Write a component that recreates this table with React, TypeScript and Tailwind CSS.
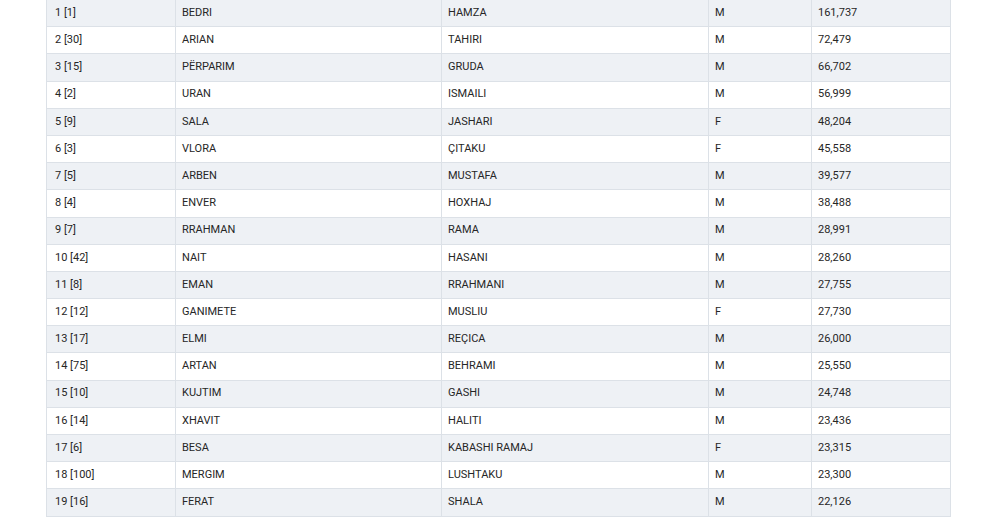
import React from "react";

const rows: [string, string, string, string, string][] = [
  ["1 [1]", "BEDRI", "HAMZA", "M", "161,737"],
  ["2 [30]", "ARIAN", "TAHIRI", "M", "72,479"],
  ["3 [15]", "PËRPARIM", "GRUDA", "M", "66,702"],
  ["4 [2]", "URAN", "ISMAILI", "M", "56,999"],
  ["5 [9]", "SALA", "JASHARI", "F", "48,204"],
  ["6 [3]", "VLORA", "ÇITAKU", "F", "45,558"],
  ["7 [5]", "ARBEN", "MUSTAFA", "M", "39,577"],
  ["8 [4]", "ENVER", "HOXHAJ", "M", "38,488"],
  ["9 [7]", "RRAHMAN", "RAMA", "M", "28,991"],
  ["10 [42]", "NAIT", "HASANI", "M", "28,260"],
  ["11 [8]", "EMAN", "RRAHMANI", "M", "27,755"],
  ["12 [12]", "GANIMETE", "MUSLIU", "F", "27,730"],
  ["13 [17]", "ELMI", "REÇICA", "M", "26,000"],
  ["14 [75]", "ARTAN", "BEHRAMI", "M", "25,550"],
  ["15 [10]", "KUJTIM", "GASHI", "M", "24,748"],
  ["16 [14]", "XHAVIT", "HALITI", "M", "23,436"],
  ["17 [6]", "BESA", "KABASHI RAMAJ", "F", "23,315"],
  ["18 [100]", "MERGIM", "LUSHTAKU", "M", "23,300"],
  ["19 [16]", "FERAT", "SHALA", "M", "22,126"],
];

export default function App() {
  return (
    <div className="w-[1000px] h-[517px] overflow-hidden bg-white" style={{ fontFamily: "Roboto, 'Liberation Sans', sans-serif" }}>
      <div className="ml-[46px] w-[905px] border-l border-r border-[#dce1e7]">
        {rows.map((r, i) => (
          <div
            key={i}
            className={`grid grid-cols-[129px_266px_267px_103px_1fr] h-[27.2px] border-b border-[#dce1e7] ${i % 2 === 0 ? "bg-[#eef1f5]" : "bg-white"}`}
          >
            {r.map((c, j) => (
              <div
                key={j}
                className={`flex items-center text-[11px] text-[#262626] ${j === 0 ? "pl-[8px]" : "pl-[6px]"} ${j < 4 ? "border-r border-[#dce1e7]" : ""}`}
              >
                {c}
              </div>
            ))}
          </div>
        ))}
      </div>
    </div>
  );
}
